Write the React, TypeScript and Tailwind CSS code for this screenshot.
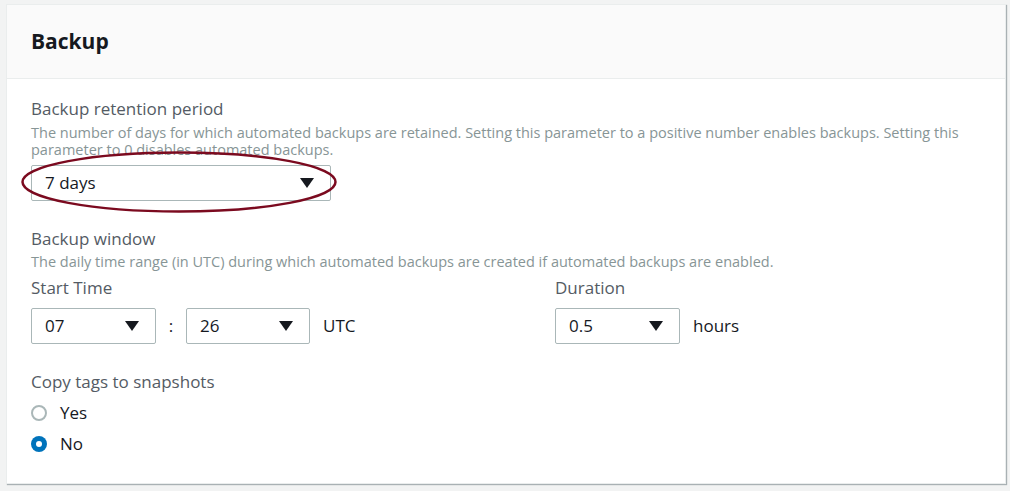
import type { ReactNode } from "react";

const font = { fontFamily: '"Open Sans", "Noto Sans", Arial, sans-serif' };

function Arrow() {
  return (
    <svg aria-hidden="true" width="14" height="10" viewBox="0 0 14 10">
      <path d="M0 0H14L7 10Z" fill="#16191f" />
    </svg>
  );
}

function Select({ value, width }: { value: string; width: string }) {
  return (
    <div
      className={`flex h-[36px] ${width} shrink-0 items-center justify-between rounded-[2px] border border-[#aab7b8] bg-white pl-[13px] pr-[16px] text-[17px] text-[#16191f]`}
    >
      <span>{value}</span>
      <Arrow />
    </div>
  );
}

function Label({ children }: { children: ReactNode }) {
  return (
    <div className="text-[17px] leading-[22px] text-[#545b64]">{children}</div>
  );
}

function Hint({ children }: { children: ReactNode }) {
  return (
    <p className="text-[14.5px] leading-[17px] text-[#879596]">{children}</p>
  );
}

function Radio({ label, checked }: { label: string; checked?: boolean }) {
  return (
    <label className="flex h-[31px] items-center gap-[13px] text-[17px] text-[#16191f]">
      {checked ? (
        <span className="flex h-[16px] w-[16px] items-center justify-center rounded-full bg-[#0073bb]">
          <span className="h-[6px] w-[6px] rounded-full bg-white" />
        </span>
      ) : (
        <span className="h-[16px] w-[16px] rounded-full border-2 border-[#aab7b8] bg-white" />
      )}
      {label}
    </label>
  );
}

export default function App() {
  return (
    <div className="min-h-[491px] bg-[#f2f3f3] px-[6px] pt-[4px]" style={font}>
      <section className="w-[1000px] border border-[#eaeded] bg-white shadow-[1px_1px_1px_0_rgba(0,28,36,0.3)]">
        <div className="flex h-[74px] items-center border-b border-[#eaeded] bg-[#fafafa] px-[24px]">
          <h2 className="text-[21px] font-bold text-[#16191f]">Backup</h2>
        </div>

        <div className="px-[24px] pb-[23px] pt-[19px]">
          <div className="relative">
            <Label>Backup retention period</Label>
            <div className="mt-[3.5px] max-w-[950px]">
              <Hint>
                The number of days for which automated backups are retained.
                Setting this parameter to a positive number enables backups.
                Setting this parameter to 0 disables automated backups.
              </Hint>
            </div>
            <div className="mt-[7.5px]">
              <Select value="7 days" width="w-[300px]" />
            </div>
            <svg
              aria-hidden="true"
              className="pointer-events-none absolute left-[-12px] top-[52px]"
              width="320"
              height="64"
              viewBox="0 0 320 64"
            >
              <ellipse
                cx="160"
                cy="32"
                rx="156.5"
                ry="29.5"
                fill="none"
                stroke="#7b0a1f"
                strokeWidth="2.5"
              />
            </svg>
          </div>

          <div className="mt-[27px]">
            <Label>Backup window</Label>
            <div className="mt-[2.5px]">
              <Hint>
                The daily time range (in UTC) during which automated backups
                are created if automated backups are enabled.
              </Hint>
            </div>
            <div className="mt-[7.5px] flex">
              <div className="w-[524px]">
                <Label>Start Time</Label>
                <div className="mt-[9px] flex items-center">
                  <Select value="07" width="w-[125px]" />
                  <span className="w-[30px] text-center text-[17px] text-[#16191f]">
                    :
                  </span>
                  <Select value="26" width="w-[124px]" />
                  <span className="ml-[13px] text-[17px] text-[#16191f]">
                    UTC
                  </span>
                </div>
              </div>
              <div>
                <Label>Duration</Label>
                <div className="mt-[9px] flex items-center">
                  <Select value="0.5" width="w-[125px]" />
                  <span className="ml-[13px] text-[17px] text-[#16191f]">
                    hours
                  </span>
                </div>
              </div>
            </div>
          </div>

          <div className="mt-[27px]">
            <Label>Copy tags to snapshots</Label>
            <div className="mt-[4.5px]">
              <Radio label="Yes" />
              <Radio label="No" checked />
            </div>
          </div>
        </div>
      </section>
    </div>
  );
}
